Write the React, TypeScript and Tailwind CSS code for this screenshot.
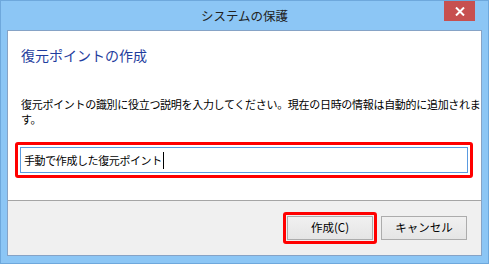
import React from 'react';

const font = { fontFamily: '"Noto Sans CJK JP", "Noto Sans", sans-serif' };

function CloseButton() {
  return (
    <div className="absolute right-[7px] top-0 flex h-[20px] w-[31px] items-center justify-center bg-[#c75050]">
      <svg width="10" height="9" viewBox="0 0 10 9">
        <path d="M1 0.5 L9 8.5 M9 0.5 L1 8.5" stroke="#fff" strokeWidth="2" />
      </svg>
    </div>
  );
}

function Button({ label }: { label: string }) {
  return (
    <div className="flex h-[24px] w-[86px] items-center justify-center border border-[#acacac] bg-gradient-to-b from-[#f0f0f0] to-[#e5e5e5] text-[11.5px] leading-none text-[#000]">
      {label}
    </div>
  );
}

export default function App() {
  return (
    <div
      style={font}
      className="flex h-[264px] w-[489px] flex-col border border-[#6ea8dc] bg-[#8cc6f5] px-[6px] pb-[7px]"
    >
      {/* title bar */}
      <div className="relative flex h-[29px] shrink-0 items-center justify-center">
        <span className="pt-[2px] text-[12.5px] leading-none text-[#222]">システムの保護</span>
        <CloseButton />
      </div>

      {/* client area */}
      <div className="flex flex-1 flex-col border border-[#86a3c6] bg-white">
        <div className="h-[169px] shrink-0 px-[13px] pt-[14px]">
          <div className="text-[14px] leading-[20px] text-[#1f3d9e]">復元ポイントの作成</div>
          <p className="mt-[32px] whitespace-nowrap text-[11px] leading-[15px] tracking-[-0.3px] text-black">
            復元ポイントの識別に役立つ説明を入力してください。現在の日時の情報は自動的に追加されま
            <br />
            す。
          </p>
          <div className="ml-[-6px] mt-[15px] w-[458px] rounded-[3px] border-[3px] border-[#ff0000] p-[2px]">
            <div className="flex h-[26px] items-center border border-[#5b9be0] px-[3px] text-[11px] tracking-[-0.4px] text-black">
              <span>手動で作成した復元ポイント</span>
              <span className="ml-[1px] h-[17px] w-[1px] bg-black" />
            </div>
          </div>
        </div>
        <div className="flex flex-1 items-start justify-end gap-[4px] border-t border-[#a5a5a5] bg-[#f0f0f0] pr-[14px] pt-[11px]">
          <div className="rounded-[3px] border-[3px] border-[#ff0000] p-[1px]">
            <Button label="作成(C)" />
          </div>
          <div className="pt-[4px]">
            <Button label="キャンセル" />
          </div>
        </div>
      </div>
    </div>
  );
}
